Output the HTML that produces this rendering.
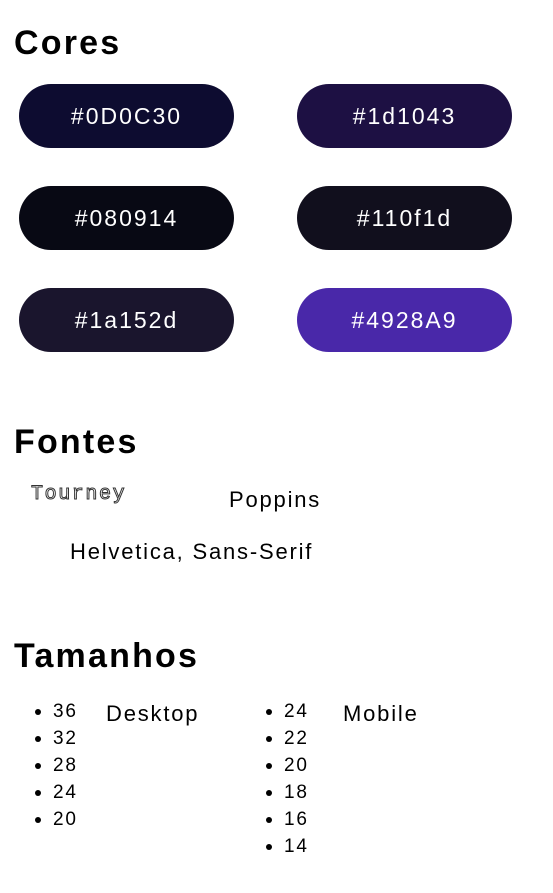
<!DOCTYPE html>
<html><head><meta charset="utf-8"><style>
html,body{margin:0;padding:0;background:#fff;width:553px;height:893px;overflow:hidden;font-family:"Liberation Sans",sans-serif;color:#000}
.a{position:absolute;white-space:nowrap;letter-spacing:1.8px}
h2{position:absolute;margin:0;font-size:34px;font-weight:bold;left:14px;line-height:40px;letter-spacing:2.2px}
.p{position:absolute;width:215px;height:64px;border-radius:32px;color:#fff;font-size:23px;line-height:64px;text-align:center;letter-spacing:2px}
.li{position:absolute;font-size:19px;line-height:27px;letter-spacing:1.8px}
.li div{position:relative;padding-left:18px}
.li div:before{content:"";position:absolute;left:0;top:11px;width:6px;height:6px;border-radius:50%;background:#000}
</style></head><body>
<h2 style="top:23px">Cores</h2>
<div class="p" style="left:19px;top:84px;background:#0D0C30">#0D0C30</div>
<div class="p" style="left:297px;top:84px;background:#1d1043">#1d1043</div>
<div class="p" style="left:19px;top:186px;background:#080914">#080914</div>
<div class="p" style="left:297px;top:186px;background:#110f1d">#110f1d</div>
<div class="p" style="left:19px;top:288px;background:#1a152d">#1a152d</div>
<div class="p" style="left:297px;top:288px;background:#4928A9">#4928A9</div>
<h2 style="top:422px">Fontes</h2>
<div class="a" style="left:31px;top:483px;font-size:20px;font-family:'Liberation Mono',monospace;color:#fff;-webkit-text-stroke:1px #333;letter-spacing:1.6px">Tourney</div>
<div class="a" style="left:229px;top:487px;font-size:22px">Poppins</div>
<div class="a" style="left:70px;top:539px;font-size:22px">Helvetica, Sans-Serif</div>
<h2 style="top:636px">Tamanhos</h2>
<div class="li" style="left:35px;top:698px"><div>36</div><div>32</div><div>28</div><div>24</div><div>20</div></div>
<div class="a" style="left:106px;top:701px;font-size:22px">Desktop</div>
<div class="li" style="left:266px;top:698px"><div>24</div><div>22</div><div>20</div><div>18</div><div>16</div><div>14</div></div>
<div class="a" style="left:343px;top:701px;font-size:22px">Mobile</div>
</body></html>
